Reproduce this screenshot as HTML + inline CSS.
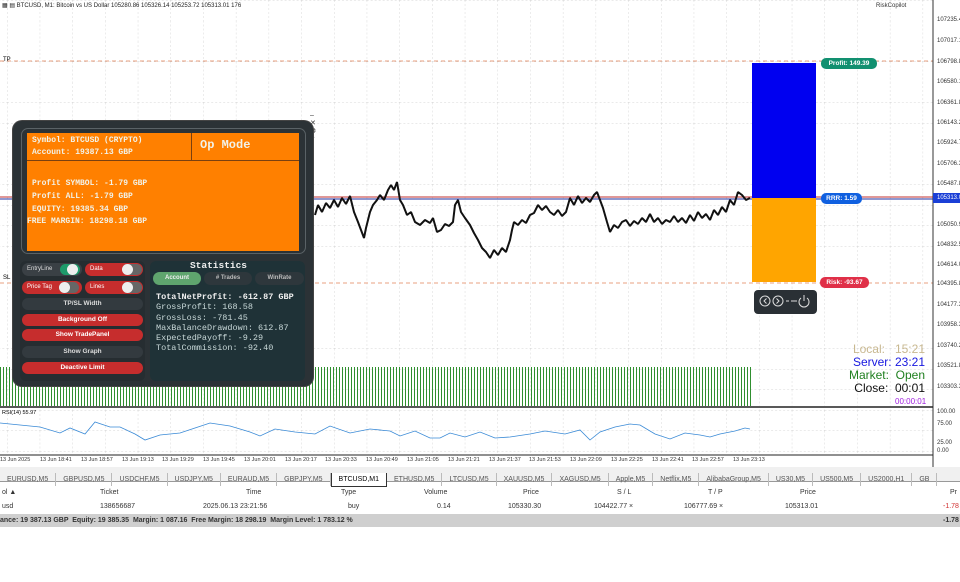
<!DOCTYPE html>
<html><head><meta charset="utf-8"><style>
*{margin:0;padding:0;box-sizing:border-box}
body{width:960px;height:582px;background:#fff;font-family:"Liberation Sans",sans-serif;overflow:hidden;position:relative}
.abs{position:absolute}
.mono{font-family:"Liberation Mono",monospace}
.ax{position:absolute;left:937px;font-size:6px;color:#333}
.tl{position:absolute;top:457px;font-size:5.5px;color:#333;white-space:nowrap}
.btn{position:absolute;left:22px;width:121px;height:12px;border-radius:6px;background:#c62d2d;color:#fff;font-size:6.5px;font-weight:bold;text-align:center;line-height:12px}
.tab{display:inline-block;padding:0 7px;border-right:1px solid #bbb;font-size:7px;color:#555;line-height:13px}
</style></head><body>
<svg class="abs" style="left:0;top:0" width="960" height="470">
<defs>
<pattern id="g" width="32.7" height="20.5" patternUnits="userSpaceOnUse" x="7" y="0">
<path d="M0 0V20.5" stroke="#c8c8c8" stroke-dasharray="2 2" stroke-width="0.7"/>
<path d="M0 0H32.7" stroke="#c8c8c8" stroke-dasharray="2 2" stroke-width="0.7"/>
</pattern>
<pattern id="v" width="3" height="10" patternUnits="userSpaceOnUse"><rect width="1" height="10" fill="#2f8f2f"/></pattern>
</defs>
<rect x="0" y="0" width="933" height="406" fill="url(#g)"/>
<rect x="0" y="408" width="933" height="47" fill="url(#g)"/>
<rect x="0" y="367" width="752" height="39" fill="url(#v)"/>
<line x1="0" y1="61" x2="933" y2="61" stroke="#e8a080" stroke-dasharray="4 3"/>
<line x1="0" y1="283" x2="933" y2="283" stroke="#e8a080" stroke-dasharray="4 3"/>
<line x1="0" y1="197" x2="933" y2="197" stroke="#c03030" stroke-width="1"/>
<line x1="0" y1="199" x2="933" y2="199" stroke="#2030a0" stroke-width="1"/>
<rect x="752" y="63" width="64" height="135" fill="#0000f0"/>
<rect x="752" y="198" width="64" height="84" fill="#ffa500"/>
<polyline fill="none" stroke="#111" stroke-width="2" stroke-linejoin="bevel" points="315,215 318,205 322,212 326,203 330,208 334,200 338,207 342,198 346,204 350,196 354,212 358,222 361,230 364,238 366,228 370,212 373,205 377,200 380,195 384,200 388,190 391,185 394,190 397,182 400,200 403,205 407,215 411,212 415,222 420,225 425,220 430,223 433,218 437,232 441,230 445,224 449,226 453,222 455,205 458,200 461,212 465,218 470,225 474,233 478,240 482,248 486,252 490,258 494,250 498,255 502,248 506,252 510,240 512,230 514,222 518,225 522,220 526,223 530,215 534,213 538,205 542,210 546,206 550,212 554,215 558,210 562,216 566,212 570,198 574,205 578,196 582,203 586,198 590,202 594,195 597,192 600,200 603,208 607,222 610,232 614,225 618,228 622,222 626,220 630,226 634,221 638,224 642,218 646,222 650,214 654,222 658,218 662,224 666,220 670,222 674,216 678,222 682,218 686,223 690,215 694,221 698,212 702,218 706,214 710,220 714,210 718,215 722,207 726,212 730,200 734,205 738,192 742,195 746,200 750,198"/>
<polyline fill="none" stroke="#3a8ad6" stroke-width="0.8" points="0,423 30,426 40,427 60,433 70,428 85,434 95,422 110,427 120,427 135,434 145,440 160,435 180,433 195,428 210,423 230,426 250,432 260,436 275,429 295,432 315,434 330,426 350,433 370,429 390,431 400,436 415,431 430,438 440,438 450,433 465,437 480,432 495,438 510,437 530,434 545,431 565,434 580,430 590,440 600,432 615,427 630,424 640,425 655,434 670,439 685,433 700,435 710,437 720,434 735,431 745,428 750,429"/>
<line x1="933" y1="0" x2="933" y2="468" stroke="#333"/>
<line x1="0" y1="407" x2="933" y2="407" stroke="#222" stroke-width="1.5"/>
<line x1="0" y1="455" x2="933" y2="455" stroke="#222"/>
<rect x="933" y="193" width="27" height="10" fill="#1b3fd6"/>
</svg>
<div class="abs" style="left:2px;top:2px;font-size:6px;color:#222">▦ ▤ BTCUSD, M1: Bitcoin vs US Dollar 105280.86 105326.14 105253.72 105313.01 176</div>
<div class="abs" style="left:3px;top:57px;font-size:6px">TP</div>
<div class="abs" style="left:3px;top:275px;font-size:6px">SL</div>
<div class="abs" style="left:876px;top:3px;font-size:6px;color:#333">RiskCopilot</div>
<div class="ax" style="top:17px">107235.4</div><div class="ax" style="top:38px">107017.1</div><div class="ax" style="top:59px">106798.8</div><div class="ax" style="top:79px">106580.1</div><div class="ax" style="top:100px">106361.8</div><div class="ax" style="top:120px">106143.2</div><div class="ax" style="top:140px">105924.7</div><div class="ax" style="top:161px">105706.3</div><div class="ax" style="top:181px">105487.8</div><div class="ax" style="top:195px;color:#fff">105313.0</div><div class="ax" style="top:222px">105050.9</div><div class="ax" style="top:242px">104832.5</div><div class="ax" style="top:262px">104614.0</div><div class="ax" style="top:281px">104395.8</div><div class="ax" style="top:302px">104177.3</div><div class="ax" style="top:322px">103958.3</div><div class="ax" style="top:343px">103740.2</div><div class="ax" style="top:363px">103521.8</div><div class="ax" style="top:384px">103303.3</div><div class="ax" style="top:409px">100.00</div><div class="ax" style="top:421px">75.00</div><div class="ax" style="top:440px">25.00</div><div class="ax" style="top:448px">0.00</div>
<div class="tl" style="left:0">13 Jun 2025</div><div class="tl" style="left:40px">13 Jun 18:41</div><div class="tl" style="left:81px">13 Jun 18:57</div><div class="tl" style="left:122px">13 Jun 19:13</div><div class="tl" style="left:162px">13 Jun 19:29</div><div class="tl" style="left:203px">13 Jun 19:45</div><div class="tl" style="left:244px">13 Jun 20:01</div><div class="tl" style="left:285px">13 Jun 20:17</div><div class="tl" style="left:325px">13 Jun 20:33</div><div class="tl" style="left:366px">13 Jun 20:49</div><div class="tl" style="left:407px">13 Jun 21:05</div><div class="tl" style="left:448px">13 Jun 21:21</div><div class="tl" style="left:489px">13 Jun 21:37</div><div class="tl" style="left:529px">13 Jun 21:53</div><div class="tl" style="left:570px">13 Jun 22:09</div><div class="tl" style="left:611px">13 Jun 22:25</div><div class="tl" style="left:652px">13 Jun 22:41</div><div class="tl" style="left:692px">13 Jun 22:57</div><div class="tl" style="left:733px">13 Jun 23:13</div>
<div class="abs" style="left:2px;top:410px;font-size:5.5px">RSI(14) 55.97</div>
<div class="abs" style="left:821px;top:58px;width:56px;height:11px;border-radius:5px;background:#129070;color:#fff;font-size:6.5px;font-weight:bold;text-align:center;line-height:11px">Profit: 149.39</div>
<div class="abs" style="left:821px;top:193px;width:41px;height:11px;border-radius:5px;background:#1060e0;color:#fff;font-size:6.5px;font-weight:bold;text-align:center;line-height:11px">RRR: 1.59</div>
<div class="abs" style="left:820px;top:277px;width:49px;height:11px;border-radius:5px;background:#e03048;color:#fff;font-size:6.5px;font-weight:bold;text-align:center;line-height:11px">Risk: -93.67</div>
<div class="abs" style="left:754px;top:290px;width:63px;height:24px;border-radius:4px;background:#2a3035"></div>
<svg class="abs" style="left:754px;top:290px" width="63" height="24" fill="none" stroke="#ddd" stroke-width="1">
<circle cx="11" cy="11" r="5"/><path d="M12.5 8.5 10 11 12.5 13.5"/>
<circle cx="24" cy="11" r="5"/><path d="M22.5 8.5 25 11 22.5 13.5"/>
<path d="M32 11h3M37 11h6"/><path d="M47 8a5 5 0 1 0 6 0M50 5v6"/></svg>
<div class="abs" style="left:830px;top:343px;width:95px;text-align:right;font-size:12px;line-height:13px">
<div style="color:#c8b890">Local: &nbsp;&nbsp;15:21</div><div style="color:#1818e0">Server: 23:21</div><div style="color:#208020">Market: &nbsp;Open</div><div style="color:#111">Close: &nbsp;00:01</div></div>
<div class="abs" style="left:895px;top:397px;font-size:8px;color:#a020e0">00:00:01</div>
<div class="abs" style="left:310px;top:112px;font-size:7px;line-height:8px;color:#333">–<br>✕<br>⚙<br>⌃<br>●</div>
<!-- panel -->
<div class="abs" style="left:13px;top:121px;width:300px;height:265px;background:#2b3236;border-radius:9px;box-shadow:0 0 0 1px #444"></div>
<div class="abs" style="left:21px;top:128px;width:285px;height:126px;border:1px solid #5a6266;border-radius:7px;background:#2b3236"></div>
<div class="abs mono" style="left:27px;top:133px;width:272px;height:118px;background:#ff8000;color:#f2f2e8;font-size:8px;font-weight:bold">
<div style="position:absolute;left:0;top:0;width:165px;height:28px;border-right:1px solid #7a4010;border-bottom:1px solid #7a4010;padding:2px 0 0 5px;line-height:12px">Symbol: BTCUSD (CRYPTO)<br>Account: 19387.13 GBP</div>
<div style="position:absolute;left:165px;top:0;width:107px;height:28px;border-bottom:1px solid #7a4010;padding:5px 0 0 8px;font-size:12px">Op Mode</div>
<div style="position:absolute;left:0;top:45px;line-height:12.8px;padding-left:5px">Profit SYMBOL: -1.79 GBP<br>Profit ALL: -1.79 GBP<br>EQUITY: 19385.34 GBP<br><span style="margin-left:-5px">FREE MARGIN: 18298.18 GBP</span></div>
</div>
<div class="abs" style="left:20px;top:261px;width:125px;height:120px;background:#262d31;border-radius:6px"></div>
<div class="abs" style="left:150px;top:261px;width:155px;height:120px;background:#1f3237;border-radius:6px"></div>
<div class="abs" style="left:22px;top:263px;width:60px;height:13px;border-radius:7px;background:#3a4045;color:#ddd;font-size:6px;line-height:13px;padding-left:5px">EntryLine<span style="position:absolute;left:38px;top:1px;width:20px;height:11px;border-radius:6px;background:#1d9a6a"></span><span style="position:absolute;left:45px;top:1px;width:11px;height:11px;border-radius:6px;background:#eee"></span></div>
<div class="abs" style="left:85px;top:263px;width:58px;height:13px;border-radius:7px;background:#c62d2d;color:#fff;font-size:6px;line-height:13px;padding-left:5px">Data<span style="position:absolute;left:37px;top:1px;width:20px;height:11px;border-radius:6px;background:#666"></span><span style="position:absolute;left:37px;top:1px;width:11px;height:11px;border-radius:6px;background:#eee"></span></div>
<div class="abs" style="left:22px;top:281px;width:60px;height:13px;border-radius:7px;background:#c62d2d;color:#fff;font-size:6px;line-height:13px;padding-left:5px">Price Tag<span style="position:absolute;left:37px;top:1px;width:20px;height:11px;border-radius:6px;background:#666"></span><span style="position:absolute;left:37px;top:1px;width:11px;height:11px;border-radius:6px;background:#eee"></span></div>
<div class="abs" style="left:85px;top:281px;width:58px;height:13px;border-radius:7px;background:#c62d2d;color:#fff;font-size:6px;line-height:13px;padding-left:5px">Lines<span style="position:absolute;left:37px;top:1px;width:20px;height:11px;border-radius:6px;background:#666"></span><span style="position:absolute;left:37px;top:1px;width:11px;height:11px;border-radius:6px;background:#eee"></span></div>
<div class="btn" style="top:298px;background:#333a3f;color:#ddd">TP/SL Width</div>
<div class="btn" style="top:314px">Background Off</div>
<div class="btn" style="top:329px">Show TradePanel</div>
<div class="btn" style="top:346px;background:#333a3f;color:#ddd">Show Graph</div>
<div class="btn" style="top:362px">Deactive Limit</div>
<div class="abs mono" style="left:150px;top:260px;width:137px;text-align:center;color:#eee;font-size:9.5px;font-weight:bold">Statistics</div>
<div class="abs" style="left:153px;top:272px;width:48px;height:13px;border-radius:7px;background:#5fa56e;color:#eee;font-size:6px;font-weight:bold;text-align:center;line-height:13px">Account</div>
<div class="abs" style="left:204px;top:272px;width:48px;height:13px;border-radius:7px;background:#2e373c;color:#bbb;font-size:6px;font-weight:bold;text-align:center;line-height:13px"># Trades</div>
<div class="abs" style="left:255px;top:272px;width:49px;height:13px;border-radius:7px;background:#2e373c;color:#bbb;font-size:6px;font-weight:bold;text-align:center;line-height:13px">WinRate</div>
<div class="abs mono" style="left:156px;top:292px;font-size:8.5px;line-height:10.3px;color:#c8d8d8"><b style="color:#f0f0f0">TotalNetProfit: -612.87 GBP</b><br>GrossProfit: 168.58<br>GrossLoss: -781.45<br>MaxBalanceDrawdown: 612.87<br>ExpectedPayoff: -9.29<br>TotalCommission: -92.40</div>
<!-- bottom -->
<div class="abs" style="left:0;top:467px;width:960px;height:15px;background:#f0f0f0;border-bottom:1px solid #999;white-space:nowrap;padding-top:1px">
<span class="tab">EURUSD,M5</span><span class="tab">GBPUSD,M5</span><span class="tab">USDCHF,M5</span><span class="tab">USDJPY,M5</span><span class="tab">EURAUD,M5</span><span class="tab">GBPJPY,M5</span><span class="tab" style="background:#fff;color:#000;border:1px solid #333;border-top:none">BTCUSD,M1</span><span class="tab">ETHUSD,M5</span><span class="tab">LTCUSD,M5</span><span class="tab">XAUUSD,M5</span><span class="tab">XAGUSD,M5</span><span class="tab">Apple,M5</span><span class="tab">Netflix,M5</span><span class="tab">AlibabaGroup,M5</span><span class="tab">US30,M5</span><span class="tab">US500,M5</span><span class="tab">US2000,H1</span><span class="tab">GB</span></div>
<div class="abs" style="left:0;top:485px;width:960px;height:30px;font-size:7px;color:#333">
<span class="abs" style="left:2px;top:4px">ol ▲</span><span class="abs" style="left:100px;top:4px">Ticket</span><span class="abs" style="left:246px;top:4px">Time</span><span class="abs" style="left:341px;top:4px">Type</span><span class="abs" style="left:424px;top:4px">Volume</span><span class="abs" style="left:523px;top:4px">Price</span><span class="abs" style="left:617px;top:4px">S / L</span><span class="abs" style="left:708px;top:4px">T / P</span><span class="abs" style="left:800px;top:4px">Price</span><span class="abs" style="left:950px;top:4px">Pr</span>
<span class="abs" style="left:2px;top:18px">usd</span><span class="abs" style="left:100px;top:18px">138656687</span><span class="abs" style="left:203px;top:18px">2025.06.13 23:21:56</span><span class="abs" style="left:348px;top:18px">buy</span><span class="abs" style="left:437px;top:18px">0.14</span><span class="abs" style="left:508px;top:18px">105330.30</span><span class="abs" style="left:594px;top:18px">104422.77 ×</span><span class="abs" style="left:684px;top:18px">106777.69 ×</span><span class="abs" style="left:785px;top:18px">105313.01</span><span class="abs" style="left:943px;top:18px;color:#d03030">-1.78</span></div>
<div class="abs" style="left:0;top:514px;width:960px;height:13px;background:#cfcfcf;font-size:7px;font-weight:bold;color:#333;line-height:13px;white-space:nowrap">ance: 19 387.13 GBP &nbsp;Equity: 19 385.35 &nbsp;Margin: 1 087.16 &nbsp;Free Margin: 18 298.19 &nbsp;Margin Level: 1 783.12 %<span class="abs" style="left:943px">-1.78</span></div>
</body></html>
